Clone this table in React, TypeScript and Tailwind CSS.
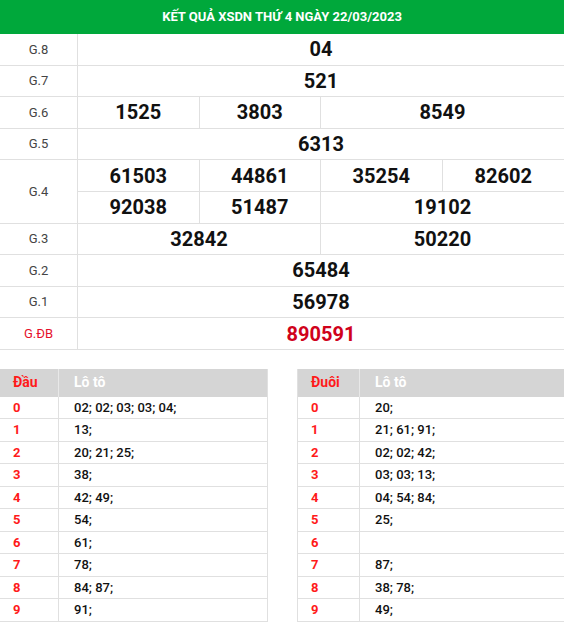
const rowH = 'h-[30.6px]'

interface Prize {
  label: string
  rows: { value: string; span: 1 | 2 | 4 }[][]
  special?: boolean
}

const prizes: Prize[] = [
  { label: 'G.8', rows: [[{ value: '04', span: 4 }]] },
  { label: 'G.7', rows: [[{ value: '521', span: 4 }]] },
  {
    label: 'G.6',
    rows: [[{ value: '1525', span: 1 }, { value: '3803', span: 1 }, { value: '8549', span: 2 }]],
  },
  { label: 'G.5', rows: [[{ value: '6313', span: 4 }]] },
  {
    label: 'G.4',
    rows: [
      [
        { value: '61503', span: 1 },
        { value: '44861', span: 1 },
        { value: '35254', span: 1 },
        { value: '82602', span: 1 },
      ],
      [{ value: '92038', span: 1 }, { value: '51487', span: 1 }, { value: '19102', span: 2 }],
    ],
  },
  { label: 'G.3', rows: [[{ value: '32842', span: 2 }, { value: '50220', span: 2 }]] },
  { label: 'G.2', rows: [[{ value: '65484', span: 4 }]] },
  { label: 'G.1', rows: [[{ value: '56978', span: 4 }]] },
  { label: 'G.ĐB', rows: [[{ value: '890591', span: 4 }]], special: true },
]

const dau = [
  '02; 02; 03; 03; 04;',
  '13;',
  '20; 21; 25;',
  '38;',
  '42; 49;',
  '54;',
  '61;',
  '78;',
  '84; 87;',
  '91;',
]

const duoi = [
  '20;',
  '21; 61; 91;',
  '02; 02; 42;',
  '03; 03; 13;',
  '04; 54; 84;',
  '25;',
  '',
  '87;',
  '38; 78;',
  '49;',
]

const spanClass = { 1: 'col-span-1', 2: 'col-span-2', 4: 'col-span-4' }

function PrizeRow({ prize }: { prize: Prize }) {
  return (
    <div className="flex border-b border-[#e0e0e0]">
      <div
        className={`w-[78px] shrink-0 flex items-center justify-center border-r border-[#e0e0e0] text-[13px] ${
          prize.special ? 'text-[#e5102b]' : 'text-[#444]'
        }`}
      >
        {prize.label}
      </div>
      <div className="flex-1 flex flex-col">
        {prize.rows.map((cells, i) => (
          <div
            key={i}
            className={`grid grid-cols-4 ${i < prize.rows.length - 1 ? 'border-b border-[#e0e0e0]' : ''}`}
          >
            {cells.map((c, j) => (
              <div
                key={j}
                className={`${spanClass[c.span]} ${rowH} flex items-center justify-center text-[20px] font-bold ${
                  j < cells.length - 1 ? 'border-r border-[#e0e0e0]' : ''
                } ${prize.special ? 'text-[#d0021b]' : 'text-[#111]'}`}
              >
                {c.value}
              </div>
            ))}
          </div>
        ))}
      </div>
    </div>
  )
}

function LotoTable({ title, items, firstCol }: { title: string; items: string[]; firstCol: string }) {
  return (
    <div className="border-l border-[#e0e0e0] border-r">
      <div className="flex h-[28px] bg-[#d5d5d5] text-[14px] font-bold">
        <div className={`${firstCol} shrink-0 flex items-center pl-[13px] text-[#ff1a1a] border-r border-[#e8e8e8]`}>
          {title}
        </div>
        <div className="flex-1 flex items-center pl-[15px] text-white">Lô tô</div>
      </div>
      {items.map((v, i) => (
        <div key={i} className="flex h-[22.5px] border-b border-[#e0e0e0] text-[13px]">
          <div
            className={`${firstCol} shrink-0 flex items-center pl-[13px] font-bold text-[#ff1a1a] border-r border-[#e0e0e0]`}
          >
            {i}
          </div>
          <div className="flex-1 flex items-center pl-[15px] font-medium text-[#111]">{v}</div>
        </div>
      ))}
    </div>
  )
}

export default function App() {
  return (
    <div className="w-[564px] h-[626px] overflow-hidden bg-white font-['Roboto',sans-serif]">
      <div className="h-[34px] bg-[#00a83b] flex items-center justify-center text-white text-[13px] font-bold">
        KẾT QUẢ XSDN THỨ 4 NGÀY 22/03/2023
      </div>
      <div>
        {prizes.map(p => (
          <PrizeRow key={p.label} prize={p} />
        ))}
      </div>
      <div className="flex justify-between mt-[19px]">
        <div className="w-[269px] -ml-px">
          <LotoTable title="Đầu" items={dau} firstCol="w-[59px]" />
        </div>
        <div className="w-[268px] -mr-px">
          <LotoTable title="Đuôi" items={duoi} firstCol="w-[62px]" />
        </div>
      </div>
    </div>
  )
}
